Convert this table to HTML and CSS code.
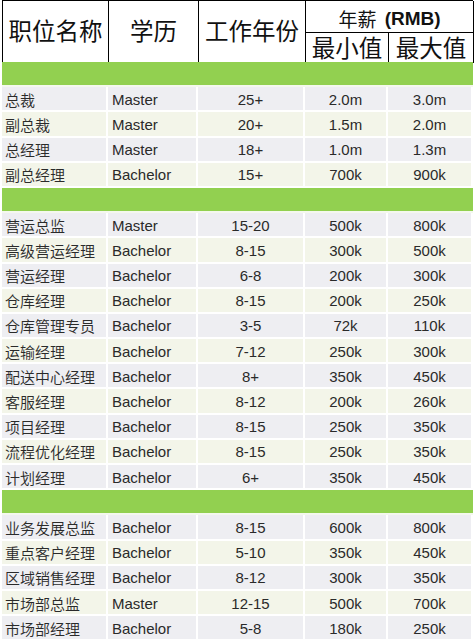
FILE: index.html
```html
<!DOCTYPE html>
<html lang="zh">
<head>
<meta charset="utf-8">
<title>职位薪资</title>
<link rel="stylesheet" href="styles.css">
</head>
<body>
<div class="sheet">
  <div class="head">
    <div class="h h-title h-span">职位名称</div>
    <div class="h h-title h-span">学历</div>
    <div class="h h-title h-span">工作年份</div>
    <div class="h h-salary">年薪 <b>(RMB)</b></div>
    <div class="h h-title h-sub">最小值</div>
    <div class="h h-title h-sub h-last">最大值</div>
  </div>
  <div class="body">
    <div class="band"></div>
    <div class="c n a">总裁</div><div class="c e a">Master</div><div class="c m a">25+</div><div class="c m a">2.0m</div><div class="c m a">3.0m</div>
    <div class="c n b">副总裁</div><div class="c e b">Master</div><div class="c m b">20+</div><div class="c m b">1.5m</div><div class="c m b">2.0m</div>
    <div class="c n a">总经理</div><div class="c e a">Master</div><div class="c m a">18+</div><div class="c m a">1.0m</div><div class="c m a">1.3m</div>
    <div class="c n b">副总经理</div><div class="c e b">Bachelor</div><div class="c m b">15+</div><div class="c m b">700k</div><div class="c m b">900k</div>
    <div class="band"></div>
    <div class="c n a">营运总监</div><div class="c e a">Master</div><div class="c m a">15-20</div><div class="c m a">500k</div><div class="c m a">800k</div>
    <div class="c n b">高级营运经理</div><div class="c e b">Bachelor</div><div class="c m b">8-15</div><div class="c m b">300k</div><div class="c m b">500k</div>
    <div class="c n a">营运经理</div><div class="c e a">Bachelor</div><div class="c m a">6-8</div><div class="c m a">200k</div><div class="c m a">300k</div>
    <div class="c n b">仓库经理</div><div class="c e b">Bachelor</div><div class="c m b">8-15</div><div class="c m b">200k</div><div class="c m b">250k</div>
    <div class="c n a">仓库管理专员</div><div class="c e a">Bachelor</div><div class="c m a">3-5</div><div class="c m a">72k</div><div class="c m a">110k</div>
    <div class="c n b">运输经理</div><div class="c e b">Bachelor</div><div class="c m b">7-12</div><div class="c m b">250k</div><div class="c m b">300k</div>
    <div class="c n a">配送中心经理</div><div class="c e a">Bachelor</div><div class="c m a">8+</div><div class="c m a">350k</div><div class="c m a">450k</div>
    <div class="c n b">客服经理</div><div class="c e b">Bachelor</div><div class="c m b">8-12</div><div class="c m b">200k</div><div class="c m b">260k</div>
    <div class="c n a">项目经理</div><div class="c e a">Bachelor</div><div class="c m a">8-15</div><div class="c m a">250k</div><div class="c m a">350k</div>
    <div class="c n b">流程优化经理</div><div class="c e b">Bachelor</div><div class="c m b">8-15</div><div class="c m b">250k</div><div class="c m b">350k</div>
    <div class="c n a">计划经理</div><div class="c e a">Bachelor</div><div class="c m a">6+</div><div class="c m a">350k</div><div class="c m a">450k</div>
    <div class="band"></div>
    <div class="c n a">业务发展总监</div><div class="c e a">Bachelor</div><div class="c m a">8-15</div><div class="c m a">600k</div><div class="c m a">800k</div>
    <div class="c n b">重点客户经理</div><div class="c e b">Bachelor</div><div class="c m b">5-10</div><div class="c m b">350k</div><div class="c m b">450k</div>
    <div class="c n a">区域销售经理</div><div class="c e a">Bachelor</div><div class="c m a">8-12</div><div class="c m a">300k</div><div class="c m a">350k</div>
    <div class="c n b">市场部总监</div><div class="c e b">Master</div><div class="c m b">12-15</div><div class="c m b">500k</div><div class="c m b">700k</div>
    <div class="c n a">市场部经理</div><div class="c e a">Bachelor</div><div class="c m a">5-8</div><div class="c m a">180k</div><div class="c m a">250k</div>
  </div>
</div>
</body>
</html>
```
FILE: styles.css
```css
html, body {
  margin: 0;
  padding: 0;
  background: #ffffff;
}
body {
  font-family: "Liberation Sans", "Noto Sans CJK SC", sans-serif;
  color: #2a2a2a;
}
.sheet {
  padding-left: 2px;
  width: 471px;
}
.head {
  display: grid;
  grid-template-columns: 106px 90px 107px 83px 85px;
  grid-template-rows: 32px 30px;
  border-top: 1px solid #000;
  border-left: 1px solid #000;
  box-sizing: border-box;
  height: 62px;
}
.h {
  box-sizing: border-box;
  border-right: 1px solid #000;
  border-bottom: 1px solid #000;
  display: flex;
  align-items: center;
  justify-content: center;
  color: #111;
  font-family: "Noto Sans CJK SC", sans-serif;
  font-weight: 400;
  line-height: 1;
}
.h-title {
  font-size: 23.5px;
}
.h-span {
  grid-row: 1 / 3;
  padding-bottom: 2px;
}
.h-salary {
  grid-column: 4 / 6;
  font-size: 19px;
  padding-top: 4px;
  white-space: pre;
}
.h-salary b {
  font-family: "Liberation Sans", sans-serif;
  font-weight: 700;
  font-size: 19px;
  margin-left: 4px;
}
.h-sub {
  padding-top: 1px;
}
.body {
  display: grid;
  grid-template-columns: 106px 90px 107px 83px 85px;
  grid-auto-rows: 25.2px;
}
.band {
  grid-column: 1 / -1;
  background: #92d050;
  border-bottom: 2px solid #f4f8ee;
}
.c {
  box-sizing: border-box;
  border-right: 2px solid #ffffff;
  border-bottom: 2px solid #ffffff;
  font-size: 15px;
  display: flex;
  align-items: center;
  white-space: nowrap;
  padding-top: 1px;
}
.n {
  padding-left: 3px;
  font-weight: 350;
}
.a {
  background: #eeeef2;
}
.b {
  background: #f3f5e9;
}
.e {
  padding-left: 4px;
}
.m {
  justify-content: center;
}
```
